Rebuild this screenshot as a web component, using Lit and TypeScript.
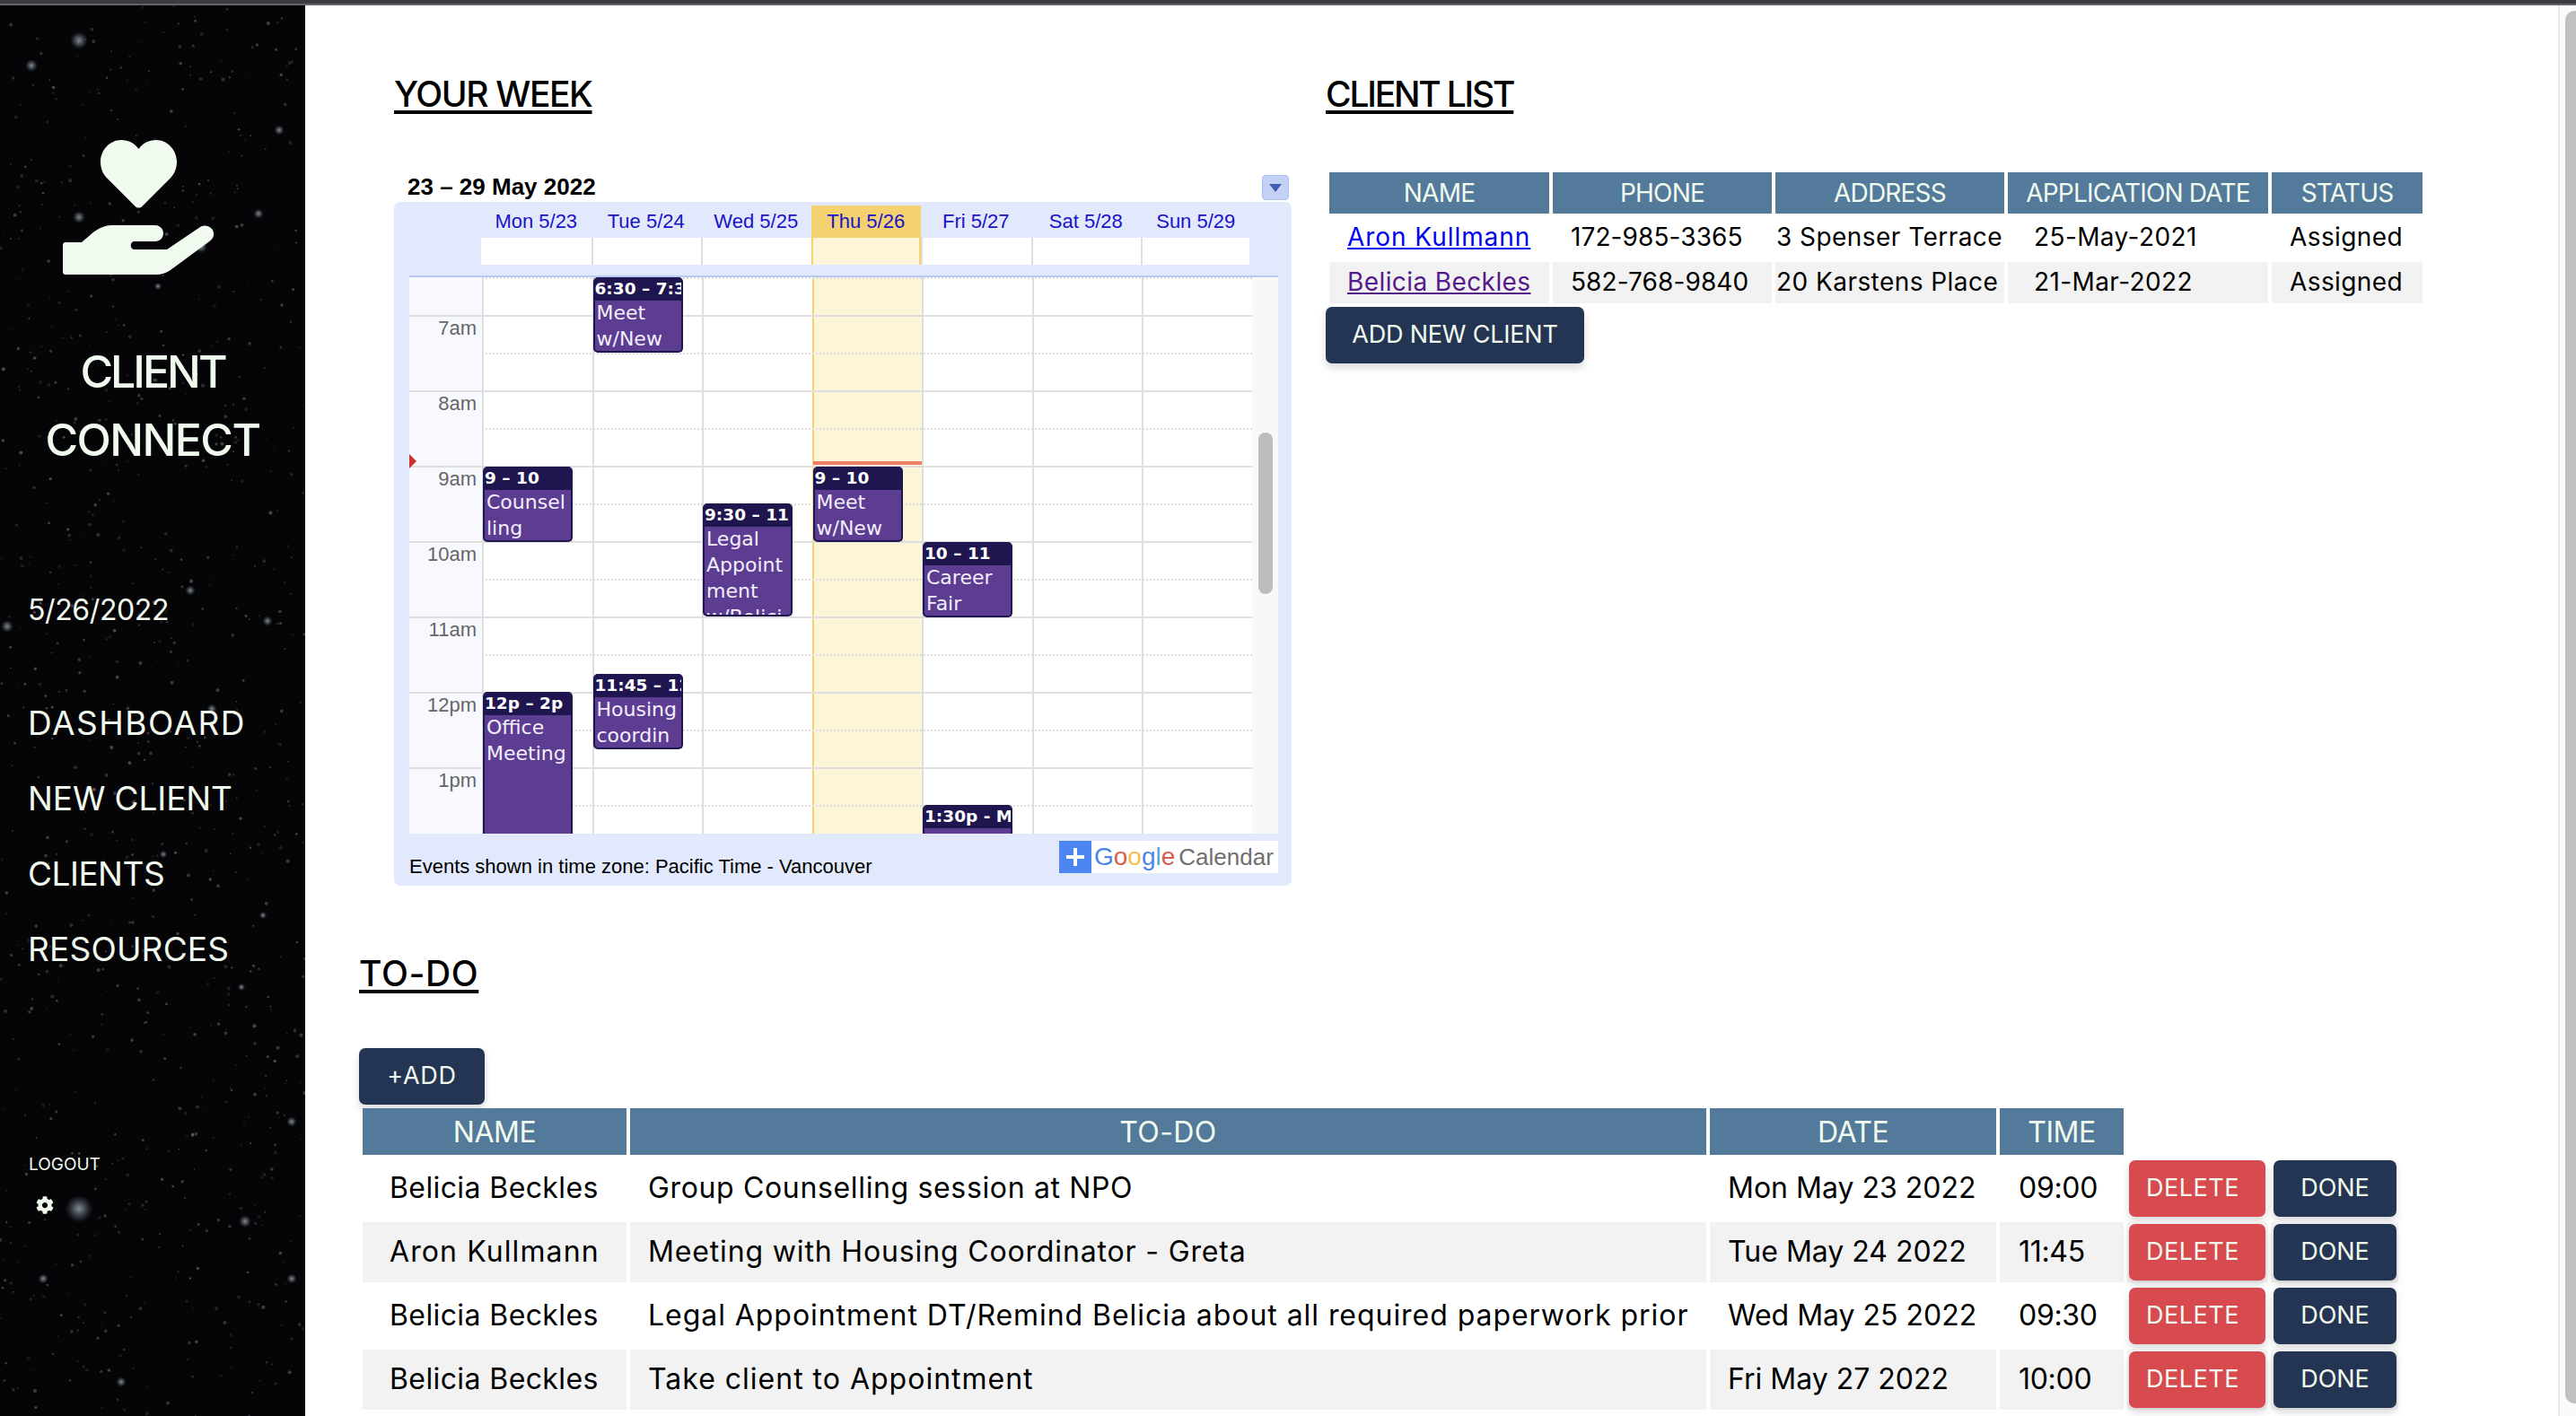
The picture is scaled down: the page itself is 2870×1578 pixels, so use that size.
import { LitElement, html, css, svg } from 'lit';
import { customElement } from 'lit/decorators.js';

const UI_FONT = css`Inter, "Liberation Sans", sans-serif`;

// seeded so the star field stays the same between renders
function makeStars() {
  let seed = 4711;
  const rnd = () => {
    seed = (seed * 16807) % 2147483647;
    return seed / 2147483647;
  };
  const dots = [];
  for (let i = 0; i < 900; i++) {
    dots.push({ x: rnd() * 340, y: rnd() * 1578, r: 0.6 + rnd() * 1.5, o: 0.08 + rnd() * 0.26 });
  }
  return dots;
}

const BRIGHT = [
  [88, 45, 7], [35, 73, 5], [311, 145, 4], [88, 242, 5], [288, 238, 4], [224, 275, 5],
  [176, 319, 3], [8, 698, 5], [298, 692, 4], [212, 658, 4], [88, 1347, 11], [273, 1361, 5],
  [325, 1250, 4], [236, 790, 4], [182, 952, 3], [269, 1100, 3], [48, 1425, 4], [325, 1425, 4],
  [135, 1540, 4], [293, 1020, 3],
];

interface CalEvent {
  col: number;
  top: number;
  height: number;
  time: string;
  lines: string[];
}

const EVENTS: CalEvent[] = [
  { col: 1, top: 0, height: 84, time: '6:30 – 7:30', lines: ['Meet', 'w/New'] },
  { col: 0, top: 211, height: 84, time: '9 – 10', lines: ['Counsel', 'ling'] },
  { col: 3, top: 211, height: 84, time: '9 – 10', lines: ['Meet', 'w/New'] },
  { col: 2, top: 252, height: 126, time: '9:30 – 11', lines: ['Legal', 'Appoint', 'ment', 'w/Belici'] },
  { col: 4, top: 295, height: 84, time: '10 – 11', lines: ['Career', 'Fair'] },
  { col: 1, top: 442, height: 84, time: '11:45 – 12', lines: ['Housing', 'coordin'] },
  { col: 0, top: 462, height: 200, time: '12p – 2p', lines: ['Office', 'Meeting'] },
  { col: 4, top: 588, height: 80, time: '1:30p - Meeting', lines: [] },
];

const DAYS = ['Mon 5/23', 'Tue 5/24', 'Wed 5/25', 'Thu 5/26', 'Fri 5/27', 'Sat 5/28', 'Sun 5/29'];
const HOURS = ['7am', '8am', '9am', '10am', '11am', '12pm', '1pm'];

const CLIENTS = [
  ['Aron Kullmann', '172-985-3365', '3 Spenser Terrace', '25-May-2021', 'Assigned'],
  ['Belicia Beckles', '582-768-9840', '20 Karstens Place', '21-Mar-2022', 'Assigned'],
];

const TODOS = [
  ['Belicia Beckles', 'Group Counselling session at NPO', 'Mon May 23 2022', '09:00'],
  ['Aron Kullmann', 'Meeting with Housing Coordinator - Greta', 'Tue May 24 2022', '11:45'],
  ['Belicia Beckles', 'Legal Appointment DT/Remind Belicia about all required paperwork prior', 'Wed May 25 2022', '09:30'],
  ['Belicia Beckles', 'Take client to Appointment', 'Fri May 27 2022', '10:00'],
];

@customElement('app-sidebar')
export class AppSidebar extends LitElement {
  static styles = css`
    :host {
      display: block;
      position: relative;
      width: 340px;
      height: 100%;
      background: #050406;
      color: #f1faee;
      font-family: ${UI_FONT};
      overflow: hidden;
    }
    .stars {
      position: absolute;
      left: 0;
      top: -6px;
      width: 340px;
      height: 1578px;
    }
    .content {
      position: relative;
      display: flex;
      flex-direction: column;
    }
    .logo {
      display: block;
      margin: 150px 0 0 70px;
      width: 170px;
      height: 150px;
    }
    .brand {
      margin: 70px 0 0;
      text-align: center;
      font-size: 50px;
      line-height: 76px;
      font-weight: 500;
    }
    .brand span {
      display: block;
      letter-spacing: -1.6px;
    }
    .brand span:first-child {
      letter-spacing: -3px;
    }
    .date {
      margin: 130px 0 0 31px;
      font-size: 32px;
      line-height: 44px;
      letter-spacing: -0.4px;
    }
    nav {
      display: flex;
      flex-direction: column;
      margin: 62px 0 0 31px;
    }
    nav a {
      font-size: 37px;
      line-height: 84px;
      color: inherit;
      text-decoration: none;
    }
    nav a:nth-child(1) { letter-spacing: 1.5px; }
    nav a:nth-child(2) { letter-spacing: -0.1px; }
    nav a:nth-child(3) { letter-spacing: -0.5px; }
    nav a:nth-child(4) { letter-spacing: 0.2px; }
    .logout {
      margin: 183px 0 0 32px;
      font-size: 19px;
      line-height: 30px;
    }
    .gear {
      display: block;
      margin: 20px 0 0 40px;
      width: 20px;
      height: 20px;
      fill: #f1faee;
    }
  `;

  render() {
    return html`
      <svg class="stars" viewBox="0 0 340 1578">
        <defs>
          <radialGradient id="glow">
            <stop offset="0" stop-color="#9aa3ad" stop-opacity="0.85"></stop>
            <stop offset="0.5" stop-color="#7c8894" stop-opacity="0.45"></stop>
            <stop offset="1" stop-color="#4c6b8a" stop-opacity="0"></stop>
          </radialGradient>
        </defs>
        ${makeStars().map((s) => svg`<circle cx=${s.x} cy=${s.y} r=${s.r} fill="#c8ced6" opacity=${s.o}></circle>`)}
        ${BRIGHT.map(([x, y, r]) => svg`<circle cx=${x} cy=${y} r=${r * 1.4} fill="url(#glow)"></circle>`)}
      </svg>
      <div class="content">
        <svg class="logo" viewBox="70 156 170 150" fill="#f1faee">
          <path d="M154.500 231.500c-1.500 0-2.800-.6-3.800-1.600l-32-32c-4-4-6.700-10.500-6.700-17.400 0-13.600 10.600-24.500 23-24.500 8.200 0 15 3.600 19.500 10 4.500-6.400 11.300-10 19.500-10 12.400 0 23 10.900 23 24.500 0 6.900-2.700 13.400-6.700 17.400l-32 32c-1 1-2.300 1.600-3.800 1.600z"></path>
          <path d="M73 270h18c9-7 18-19 34-19h48c5 0 9 4 9 9s-4 9-9 9h-23c-2.500 0-4.300 2-4.300 4.500s1.800 4.500 4.300 4.500h36l37-25c4-2.700 9.700-1.800 13 2 3.500 4.300 2.500 10.500-2 13.500l-38 28c-5 3.700-12 9.500-21 9.500H73c-1.700 0-3-1.300-3-3v-30c0-1.700 1.300-3 3-3z"></path>
        </svg>
        <h1 class="brand"><span>CLIENT</span><span>CONNECT</span></h1>
        <div class="date">5/26/2022</div>
        <nav>
          <a href="#">DASHBOARD</a>
          <a href="#">NEW CLIENT</a>
          <a href="#">CLIENTS</a>
          <a href="#">RESOURCES</a>
        </nav>
        <div class="logout">LOGOUT</div>
        <svg class="gear" viewBox="0 0 512 512">
          <path d="M487.400 315.700l-42.600-24.600c4.300-23.200 4.300-47 0-70.200l42.600-24.600c4.900-2.800 7.100-8.600 5.500-14-11.100-35.600-30-67.800-54.700-94.600-3.800-4.100-10-5.100-14.800-2.300L380.800 110c-17.900-15.400-38.500-27.300-60.800-35.100V25.800c0-5.600-3.900-10.500-9.400-11.700-36.700-8.200-74.300-7.800-109.200 0-5.500 1.200-9.400 6.100-9.400 11.700V75c-22.200 7.900-42.800 19.800-60.800 35.100L88.700 85.500c-4.900-2.800-11-1.900-14.800 2.300-24.700 26.700-43.600 58.900-54.700 94.600-1.700 5.400.6 11.200 5.500 14L67.300 221c-4.300 23.200-4.300 47 0 70.200l-42.600 24.600c-4.900 2.800-7.100 8.600-5.500 14 11.100 35.600 30 67.800 54.700 94.600 3.800 4.100 10 5.100 14.800 2.300l42.600-24.600c17.900 15.400 38.500 27.300 60.800 35.100v49.200c0 5.600 3.900 10.500 9.400 11.700 36.700 8.200 74.300 7.800 109.200 0 5.500-1.200 9.400-6.100 9.400-11.700v-49.200c22.200-7.900 42.800-19.800 60.800-35.100l42.600 24.600c4.900 2.800 11 1.900 14.800-2.300 24.700-26.700 43.600-58.900 54.700-94.600 1.500-5.500-.7-11.300-5.600-14.100zM256 336c-44.100 0-80-35.900-80-80s35.900-80 80-80 80 35.900 80 80-35.900 80-80 80z"></path>
        </svg>
      </div>
    `;
  }
}

@customElement('week-calendar')
export class WeekCalendar extends LitElement {
  static styles = css`
    :host {
      display: block;
      width: 1000px;
      font-family: "Liberation Sans", Arial, sans-serif;
      font-size: 22px;
    }
    .title-row {
      display: flex;
      justify-content: space-between;
      align-items: center;
      height: 31px;
      padding: 0 3px 0 15px;
    }
    .title {
      font-size: 26px;
      line-height: 28px;
      margin-top: -3px;
      font-weight: 700;
      color: #000;
    }
    .menu {
      display: flex;
      align-items: center;
      justify-content: center;
      width: 30px;
      height: 28px;
      margin-top: -1px;
      box-sizing: border-box;
      background: #c3d1f5;
      border: 1px solid #a9bdf0;
      border-radius: 4px;
    }
    .menu i {
      border-left: 7px solid transparent;
      border-right: 7px solid transparent;
      border-top: 9px solid #3f5fae;
    }
    .body {
      height: 762px;
      box-sizing: border-box;
      padding-top: 4px;
      background: #e3e9fc;
      border-radius: 7px;
    }
    .days,
    .allday {
      display: grid;
      grid-template-columns: repeat(7, 122.5px);
      margin-left: 97px;
      width: 856px;
    }
    .days span {
      height: 36px;
      line-height: 36px;
      text-align: center;
      color: #1a13c8;
    }
    .days .today {
      background: #f4d272;
    }
    .allday {
      height: 30px;
      background: #fff;
      margin-bottom: 12px;
    }
    .allday span {
      border-left: 2px solid #dedede;
    }
    .allday span:first-child {
      border-left: 0;
    }
    .allday .today {
      background: #fdf5d8;
      border-left: 2px solid #f6d26e;
      border-right: 2px solid #f6d26e;
    }
    .grid {
      position: relative;
      margin: 0 15px 0 17px;
      height: 622px;
      box-sizing: border-box;
      border-top: 2px solid #b9c9f6;
      background: #fff;
      overflow: hidden;
    }
    .gutter {
      position: absolute;
      left: 0;
      top: 0;
      bottom: 0;
      width: 81px;
      background: #f7f9ff;
    }
    .cols {
      position: absolute;
      left: 81px;
      top: 0;
      bottom: 0;
      width: 858px;
      display: grid;
      grid-template-columns: repeat(7, 1fr);
      border-right: 2px solid #dedede;
    }
    .cols span {
      border-left: 2px solid #dedede;
    }
    .cols .today {
      background: #fdf5d8;
      border-left: 2px solid #f6d26e;
      border-right: 2px solid #f6d26e;
      margin-right: -2px;
    }
    .lines {
      position: relative;
      width: 939px;
    }
    .first {
      height: 42px;
      box-sizing: border-box;
      margin-left: 81px;
      border-top: 2px dotted #dcdcdc;
    }
    .hour {
      position: relative;
      height: 84px;
      box-sizing: border-box;
      border-top: 2px solid #dedede;
    }
    .half {
      height: 42px;
      box-sizing: border-box;
      margin-left: 81px;
      border-bottom: 2px dotted #dcdcdc;
    }
    .label {
      position: absolute;
      right: 864px;
      top: 0;
      line-height: 26px;
      color: #666;
    }
    .event {
      position: absolute;
      width: 100px;
      box-sizing: border-box;
      overflow: hidden;
      background: #5c3d92;
      border: 2px solid #20164f;
      border-top: 0;
      border-radius: 5px;
      font-family: "DejaVu Sans", Verdana, sans-serif;
      color: #f3eefb;
      white-space: nowrap;
    }
    .event header {
      height: 26px;
      line-height: 26px;
      margin: 0 -2px -1px;
      padding-left: 2px;
      background: #20164f;
      color: #fff;
      font-weight: 700;
      font-size: 18.5px;
      overflow: hidden;
    }
    .event div {
      padding-left: 2px;
      line-height: 29px;
      font-size: 22px;
      overflow: hidden;
    }
    .now {
      position: absolute;
      left: 450px;
      top: 205px;
      width: 121px;
      height: 4px;
      background: #ee7d6a;
    }
    .marker {
      position: absolute;
      left: 0;
      top: 197px;
      border-top: 8px solid transparent;
      border-bottom: 8px solid transparent;
      border-left: 8px solid #c8342c;
    }
    .track {
      position: absolute;
      right: 0;
      top: 0;
      bottom: 0;
      width: 29px;
      background: #f8f8f8;
    }
    .thumb {
      position: absolute;
      left: 7px;
      top: 173px;
      width: 16px;
      height: 180px;
      border-radius: 8px;
      background: #bdbdbd;
    }
    .foot {
      display: flex;
      justify-content: space-between;
      padding: 8px 15px 0 17px;
    }
    .zone {
      margin-top: 16px;
      line-height: 26px;
      color: #000;
    }
    .badge {
      display: flex;
      align-items: center;
      width: 244px;
      height: 36px;
      background: #fff;
      font-size: 26px;
      color: #6f6f6f;
    }
    .plus {
      flex: none;
      display: flex;
      align-items: center;
      justify-content: center;
      width: 36px;
      height: 36px;
      margin-right: 3px;
      background: #4d86f0;
    }
    .plus svg {
      width: 22px;
      height: 22px;
    }
    .google {
      font-size: 28px;
      margin-right: 4px;
    }
    .b { color: #4a86e8; }
    .r { color: #db5b4c; }
    .y { color: #f0c24c; }
    .g { color: #5e9fd8; }
  `;

  render() {
    return html`
      <div class="title-row">
        <span class="title">23 – 29 May 2022</span>
        <span class="menu"><i></i></span>
      </div>
      <div class="body">
        <div class="days">
          ${DAYS.map((d, i) => html`<span class=${i === 3 ? 'today' : ''}>${d}</span>`)}
        </div>
        <div class="allday">
          ${DAYS.map((_, i) => html`<span class=${i === 3 ? 'today' : ''}></span>`)}
        </div>
        <div class="grid">
          <div class="gutter"></div>
          <div class="cols">
            ${DAYS.map((_, i) => html`<span class=${i === 3 ? 'today' : ''}></span>`)}
          </div>
          <div class="lines">
            <div class="first"></div>
            ${HOURS.map(
              (h) => html`<div class="hour"><span class="label">${h}</span><div class="half"></div></div>`
            )}
          </div>
          <div class="now"></div>
          <div class="marker"></div>
          ${EVENTS.map(
            (e) => html`
              <div class="event" style="left:${82 + e.col * 122.5}px;top:${e.top}px;height:${e.height}px">
                <header>${e.time}</header>
                ${e.lines.map((l) => html`<div>${l}</div>`)}
              </div>
            `
          )}
          <div class="track"><div class="thumb"></div></div>
        </div>
        <div class="foot">
          <span class="zone">Events shown in time zone: Pacific Time - Vancouver</span>
          <span class="badge">
            <span class="plus">
              <svg viewBox="0 0 22 22"><path d="M9 1h4v8h8v4h-8v8H9v-8H1V9h8z" fill="#fff"></path></svg>
            </span>
            <span class="google"><span class="b">G</span><span class="r">o</span><span class="y">o</span><span class="b">g</span><span class="g">l</span><span class="r">e</span></span>
            Calendar
          </span>
        </div>
      </div>
    `;
  }
}

@customElement('app-root')
export class AppRoot extends LitElement {
  static styles = css`
    :host {
      display: flex;
      flex-direction: column;
      height: 1578px;
      overflow: hidden;
      background: #fff;
      font-family: ${UI_FONT};
      color: #000;
    }
    .topbar {
      flex: none;
      height: 4px;
      background: #3a3c41;
      border-bottom: 2px solid #636467;
    }
    .page {
      flex: 1;
      display: flex;
      min-height: 0;
    }
    main {
      flex: 1;
      min-width: 0;
      padding-left: 60px;
    }
    .top {
      display: flex;
      padding: 79px 0 0 39px;
    }
    .week {
      width: 1000px;
    }
    .clients {
      margin-left: 38px;
    }
    h2 {
      margin: 0;
      font-size: 39px;
      line-height: 40px;
      font-weight: 500;
      text-decoration: underline;
      text-decoration-thickness: 4px;
      text-underline-offset: 4px;
    }
    .week h2 { letter-spacing: -1.4px; }
    .clients h2 { letter-spacing: -2.2px; }
    h2.todo-title { letter-spacing: 0.6px; }
    week-calendar {
      margin-top: 69px;
    }
    .clients table {
      margin-top: 63px;
    }
    table {
      border-collapse: separate;
      border-spacing: 4px;
      table-layout: fixed;
    }
    th {
      box-sizing: border-box;
      padding: 0;
      background: #537a9b;
      color: #f1faee;
      font-weight: 400;
      text-align: center;
    }
    td {
      box-sizing: border-box;
      padding: 0 0 2px;
      white-space: nowrap;
    }
    tbody tr:nth-child(even) td {
      background: #f2f2f2;
    }
    .client-table {
      width: 1226px;
      font-size: 28px;
    }
    .client-table th {
      letter-spacing: -0.8px;
    }
    .client-table th,
    .client-table td {
      height: 46px;
    }
    .client-table td:nth-child(1) { padding-left: 20px; }
    .client-table tr:nth-child(1) td:nth-child(1) { letter-spacing: 0.95px; }
    .client-table tr:nth-child(2) td:nth-child(1) { letter-spacing: 0.4px; }
    .client-table td:nth-child(2) { padding-left: 20px; letter-spacing: 0.1px; }
    .client-table td:nth-child(3) { padding-left: 1px; letter-spacing: 0.45px; }
    .client-table td:nth-child(4) { padding-left: 29px; letter-spacing: 0.4px; }
    .client-table td:nth-child(5) { padding-left: 20px; letter-spacing: 0.4px; }
    .c1 { width: 245px; }
    .c2 { width: 244px; }
    .c3 { width: 255px; }
    .c4 { width: 290px; }
    .c5 { width: 168px; }
    .client-table a {
      color: #0000ee;
    }
    .client-table a.visited {
      color: #551a8b;
    }
    .btn {
      display: block;
      box-sizing: border-box;
      height: 63px;
      border: 0;
      border-radius: 7px;
      background: #243453;
      color: #f1faee;
      font: inherit;
      font-size: 27px;
      text-align: center;
      box-shadow: 0 5px 10px rgba(0, 0, 0, 0.15);
      padding: 0 0 2px;
    }
    .add-client {
      width: 288px;
      letter-spacing: -0.2px;
    }
    .todo-title {
      margin-top: 78px;
    }
    .add-todo {
      margin-top: 63px;
      width: 140px;
      letter-spacing: 0.7px;
    }
    .todo-table {
      width: 2276px;
      font-size: 32px;
    }
    .todo-table th {
      height: 52px;
      letter-spacing: -0.5px;
    }
    .todo-table th.t2 {
      letter-spacing: 0.4px;
    }
    .todo-table th.blank {
      background: none;
    }
    .todo-table td {
      height: 67px;
    }
    .todo-table td:nth-child(1) { padding-left: 30px; letter-spacing: 0.4px; }
    .todo-table tr:nth-child(2) td:nth-child(1) { letter-spacing: 1.1px; }
    .todo-table td:nth-child(2) { padding-left: 20px; }
    .todo-table tr:nth-child(1) td:nth-child(2) { letter-spacing: 0.65px; }
    .todo-table tr:nth-child(2) td:nth-child(2) { letter-spacing: 0.85px; }
    .todo-table tr:nth-child(3) td:nth-child(2) { letter-spacing: 0.95px; }
    .todo-table tr:nth-child(4) td:nth-child(2) { letter-spacing: 1px; }
    .todo-table td:nth-child(3) { padding-left: 20px; }
    .todo-table td:nth-child(4) { padding-left: 21px; letter-spacing: -0.3px; }
    .todo-table td.action {
      padding: 0 2px;
    }
    .t1 { width: 294px; }
    .t2 { width: 1199px; }
    .t3 { width: 319px; }
    .t4 { width: 138px; }
    .t5 { width: 156px; }
    .t6 { width: 142px; }
    .delete {
      width: 152px;
      background: #d64a50;
      text-align: left;
      padding-left: 19px;
      letter-spacing: 0.5px;
    }
    .done {
      width: 137px;
      margin-left: 1px;
    }
    .scrollbar {
      flex: none;
      box-sizing: border-box;
      width: 20px;
      padding: 6px 0 0 6px;
      border-left: 2px solid #e8e8e8;
      background: #fafafa;
    }
    .scrollbar i {
      display: block;
      width: 12px;
      height: 1552px;
      border-radius: 10px 0 0 10px;
      background: #c1c1c1;
    }
  `;

  render() {
    return html`
      <div class="topbar"></div>
      <div class="page">
        <app-sidebar></app-sidebar>
        <main>
          <div class="top">
            <section class="week">
              <h2>YOUR WEEK</h2>
              <week-calendar></week-calendar>
            </section>
            <section class="clients">
              <h2>CLIENT LIST</h2>
              <table class="client-table">
                <thead>
                  <tr>
                    <th class="c1">NAME</th>
                    <th class="c2">PHONE</th>
                    <th class="c3">ADDRESS</th>
                    <th class="c4">APPLICATION DATE</th>
                    <th class="c5">STATUS</th>
                  </tr>
                </thead>
                <tbody>
                  ${CLIENTS.map(
                    (c, i) => html`
                      <tr>
                        <td><a class=${i === 1 ? 'visited' : ''} href="#">${c[0]}</a></td>
                        <td>${c[1]}</td>
                        <td>${c[2]}</td>
                        <td>${c[3]}</td>
                        <td>${c[4]}</td>
                      </tr>
                    `
                  )}
                </tbody>
              </table>
              <button class="btn add-client">ADD NEW CLIENT</button>
            </section>
          </div>
          <h2 class="todo-title">TO-DO</h2>
          <button class="btn add-todo">+ADD</button>
          <table class="todo-table">
            <thead>
              <tr>
                <th class="t1">NAME</th>
                <th class="t2">TO-DO</th>
                <th class="t3">DATE</th>
                <th class="t4">TIME</th>
                <th class="t5 blank"></th>
                <th class="t6 blank"></th>
              </tr>
            </thead>
            <tbody>
              ${TODOS.map(
                (t) => html`
                  <tr>
                    ${t.map((v) => html`<td>${v}</td>`)}
                    <td class="action"><button class="btn delete">DELETE</button></td>
                    <td class="action"><button class="btn done">DONE</button></td>
                  </tr>
                `
              )}
            </tbody>
          </table>
        </main>
        <div class="scrollbar"><i></i></div>
      </div>
    `;
  }
}
